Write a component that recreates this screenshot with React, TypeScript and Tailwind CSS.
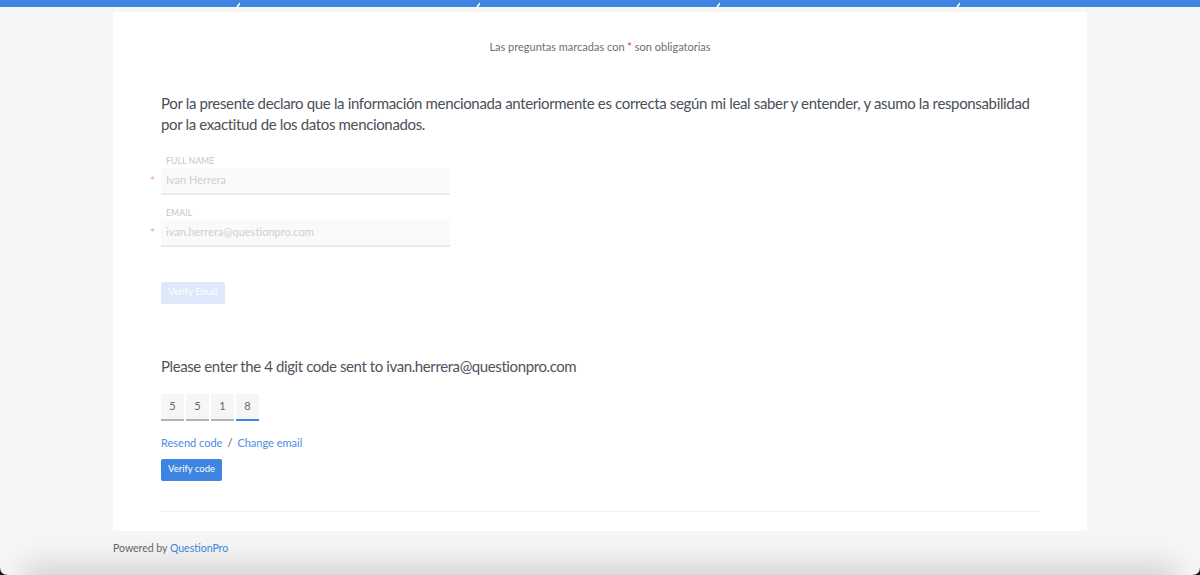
import React from "react";

const FONT = { fontFamily: "Lato, 'Open Sans', sans-serif" };

function ProgressBar() {
  return (
    <div className="flex h-[7px] w-full">
      {[0, 1, 2, 3, 4].map((i) => (
        <div key={i} className="relative flex-1 bg-[#3d85e0]">
          {i < 4 && (
            <svg className="absolute right-[-4px] top-0 h-[7px] w-[8px]" viewBox="0 0 8 7">
              <line x1="1" y1="7" x2="7" y2="0" stroke="white" strokeWidth="1.6" />
            </svg>
          )}
        </div>
      ))}
    </div>
  );
}

function Field({ label, value }: { label: string; value: string }) {
  return (
    <div className="relative w-[289px]">
      <div className="mb-[1px] pl-[5px] text-[8.5px] uppercase leading-[12px] tracking-[0.2px] text-[#c4c4c4]">{label}</div>
      <span className="absolute left-[-11px] top-[20px] text-[12px] leading-none text-[#f3a5a5]">*</span>
      <div className="flex h-[27px] items-center border-b-2 border-[#ebebeb] bg-[#fafafa] pl-[5px] text-[11px] text-[#cfcfcf]">
        {value}
      </div>
    </div>
  );
}

export default function App() {
  const digits = ["5", "5", "1", "8"];
  return (
    <div className="relative h-[575px] w-[1200px] overflow-hidden bg-[#f6f6f6]" style={FONT}>
      <ProgressBar />
      <div className="mx-[113px] mt-[5px] bg-white px-[48px] pt-[27px] pb-[19px]">
        <p className="text-center text-[11px] text-[#6f6f6f]">
          Las preguntas marcadas con <span className="text-[#e03b3b]">*</span> son obligatorias
        </p>
        <h2 className="mt-[37px] text-[15px] leading-[21px] tracking-[-0.35px] text-[#4a4f58]">
          Por la presente declaro que la información mencionada anteriormente es correcta según mi leal saber y entender, y asumo la responsabilidad por la exactitud de los datos mencionados.
        </h2>
        <div className="mt-[20px] flex flex-col gap-[12px]">
          <Field label="Full name" value="Ivan Herrera" />
          <Field label="Email" value="ivan.herrera@questionpro.com" />
        </div>
        <button className="mt-[35px] h-[22px] w-[64px] rounded-[2px] bg-[#dce9fb] text-[9.5px] text-white">
          Verify Email
        </button>
        <p className="mt-[51px] text-[15px] tracking-[-0.4px] text-[#4f545c]">
          Please enter the 4 digit code sent to ivan.herrera@questionpro.com
        </p>
        <div className="mt-[17px] flex gap-[2px]">
          {digits.map((d, i) => (
            <div
              key={i}
              className={`flex h-[27px] w-[23px] items-center justify-center border-b-2 bg-[#f6f6f6] text-[11px] text-[#666] ${
                i === 3 ? "border-[#3d85e0]" : "border-[#b4b4b4]"
              }`}
            >
              {d}
            </div>
          ))}
        </div>
        <div className="mt-[14px] text-[11px] text-[#4a8ee0]">
          <span>Resend code</span>
          <span className="mx-[5px] text-[#555]">/</span>
          <span>Change email</span>
        </div>
        <button className="mt-[7px] h-[22px] w-[61px] rounded-[2px] bg-[#3d85e0] text-[9.5px] text-white">
          Verify code
        </button>
        <div className="mt-[30px] h-px bg-[#f0f0f0]" />
      </div>
      <div className="relative z-10 mx-[113px] mt-[10px] text-[10.5px] text-[#666]">
        Powered by <span className="text-[#3d85e0]">QuestionPro</span>
      </div>
      <div className="absolute left-[40px] right-[40px] top-[580px] h-[40px] bg-[#cfcfcf] shadow-[0_0_30px_16px_rgba(0,0,0,0.15)]" />
      <svg className="absolute bottom-0 left-0 h-[8px] w-[8px]" viewBox="0 0 8 8">
        <path d="M0 0 Q0 8 8 8 L0 8 Z" fill="#111" />
      </svg>
      <svg className="absolute bottom-0 right-0 h-[8px] w-[8px]" viewBox="0 0 8 8">
        <path d="M8 0 Q8 8 0 8 L8 8 Z" fill="#111" />
      </svg>
    </div>
  );
}
